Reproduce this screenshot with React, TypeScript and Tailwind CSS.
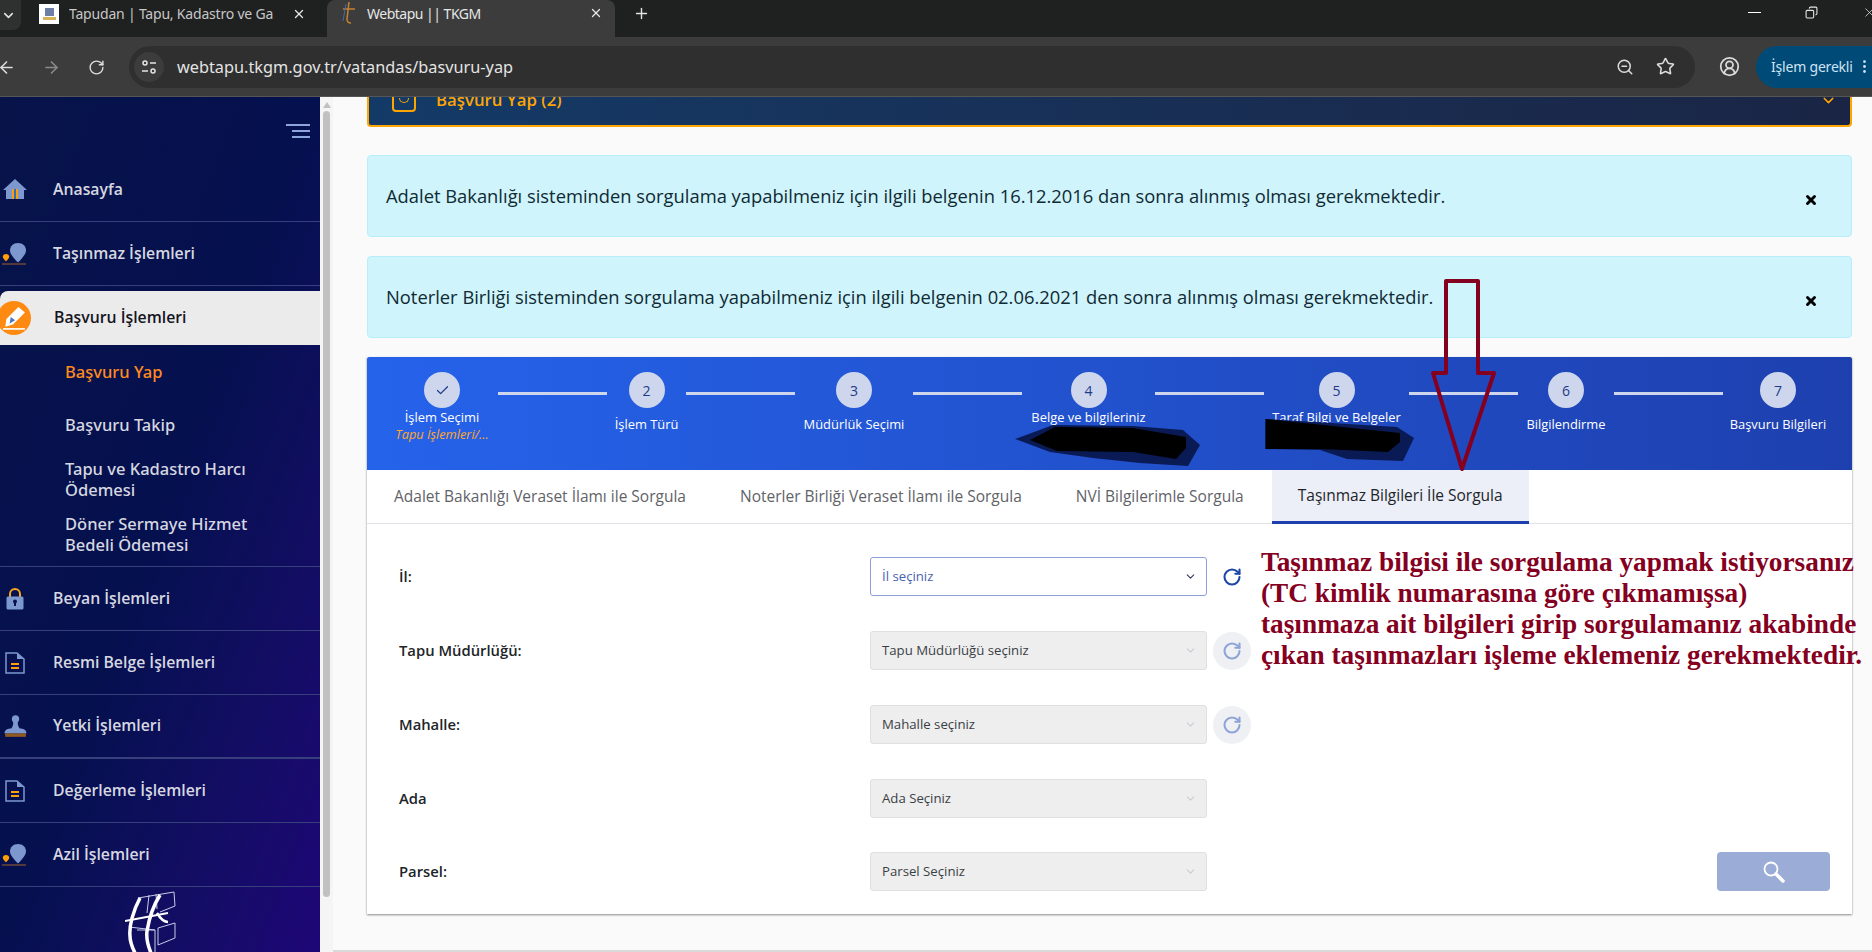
import React from 'react';
import { ArrowLeft, ArrowRight, Check, ChevronDown, Copy, MoreVertical, Plus, RotateCw, Star, CircleUserRound, X, ZoomOut } from 'lucide-react';

const menuTop = ['Beyan İşlemleri', 'Resmi Belge İşlemleri', 'Yetki İşlemleri', 'Değerleme İşlemleri', 'Azil İşlemleri'];

function PinIcon() {
  return (
    <svg width="26" height="22" viewBox="0 0 26 22">
      <path d="M16 0c5 0 8 3.500 8 7.500 0 3.500-4 8-8 12-4-4-8-8.500-8-12C8 3.500 11 0 16 0z" fill="#7d97cf" />
      <path d="M4 11c2 0 3.200 1.300 3.200 2.800 0 1.500-1.800 3.200-3.200 4.400-1.400-1.200-3.200-2.900-3.200-4.400C.8 12.300 2 11 4 11z" fill="#ff9d0a" />
      <path d="M0 21h24" stroke="#a5612a" strokeWidth="1" />
    </svg>
  );
}

function DocIcon() {
  return (
    <svg width="20" height="22" viewBox="0 0 20 22" fill="none">
      <path d="M1 1h11l7 6v14H1z" stroke="#7d97cf" strokeWidth="1.500" />
      <path d="M12 1v6h7" fill="#7d97cf" />
      <path d="M6 12h8M6 16h8" stroke="#ff9d0a" strokeWidth="1.800" />
    </svg>
  );
}

function MenuIcon({ name }: { name: string }) {
  if (name === 'Anasayfa') {
    return (
      <svg width="24" height="21" viewBox="0 0 24 21">
        <path d="M12 0l12 11h-3v9H3v-9H0z" fill="#7d97cf" />
        <rect x="9" y="10" width="6" height="10" fill="#ff9d0a" />
        <rect x="11" y="10" width="2" height="10" fill="#2f6fc0" />
      </svg>
    );
  }
  if (name === 'Beyan İşlemleri') {
    return (
      <svg width="18" height="22" viewBox="0 0 18 22">
        <path d="M4 9V6a5 5 0 0 1 10 0v3" fill="none" stroke="#f5a623" strokeWidth="2" />
        <rect x="0.500" y="8.500" width="17" height="13" rx="1.500" fill="#7d97cf" />
        <circle cx="9" cy="13.500" r="2" fill="#071150" />
        <rect x="8" y="14" width="2" height="4" fill="#071150" />
      </svg>
    );
  }
  if (name === 'Yetki İşlemleri') {
    return (
      <svg width="23" height="23" viewBox="0 0 20 20">
        <circle cx="10" cy="3.500" r="3.200" fill="#7d97cf" />
        <path d="M8 6h4c0 3 .5 4 1.500 5.500 3 .3 6 1 6 4.500H.5c0-3.500 3-4.200 6-4.500C7.500 10 8 9 8 6z" fill="#7d97cf" />
        <rect x="1" y="16" width="18" height="3" fill="#8f5a22" />
      </svg>
    );
  }
  if (name === 'Azil İşlemleri' || name === 'Taşınmaz İşlemleri') return <PinIcon />;
  return <DocIcon />;
}

function TopItem({ name, thick }: { name: string; thick?: boolean }) {
  return (
    <div className={`flex items-center h-[64px] shrink-0 border-[#37407c] ${thick ? 'border-b-2' : 'border-b'}`}>
      <div className="w-[53px] shrink-0 flex justify-center pr-[25px] pl-[2px]">
        <MenuIcon name={name} />
      </div>
      <span className="text-[15.800px] font-semibold text-[#d6d7e0]">{name}</span>
    </div>
  );
}

function Sidebar() {
  return (
    <aside className="w-[320px] shrink-0 h-full bg-gradient-to-br from-[#071349] via-[#05104f] to-[#1e0677] flex flex-col overflow-hidden">
      <div className="h-[61px] shrink-0 flex flex-col items-end gap-[4px] pt-[27px] pr-[10px]">
        <div className="w-[24px] h-[2px] bg-[#8ea5dc]" />
        <div className="w-[18px] h-[2px] bg-[#8ea5dc]" />
        <div className="w-[18px] h-[2px] bg-[#8ea5dc]" />
      </div>
      <TopItem name="Anasayfa" />
      <TopItem name="Taşınmaz İşlemleri" />
      <div className="mt-[5px] h-[54px] shrink-0 bg-[#ebebeb] rounded-tl-lg flex items-center">
        <div className="w-[54px] shrink-0 -ml-[3px] flex">
          <div className="w-[34px] h-[34px] rounded-full bg-[#ff8a12] flex items-center justify-center">
            <svg width="24" height="24" viewBox="0 0 22 22">
              <path d="M15 1l6 5L10 17l-7 2 1-7z" fill="#fff" />
              <path d="M8 10l4 3-5 3z" fill="#4a76c8" />
              <path d="M1 21h20" stroke="#fff" strokeWidth="1.500" />
            </svg>
          </div>
        </div>
        <span className="ml-[3px] text-[15.800px] font-semibold text-[#15151f]">Başvuru İşlemleri</span>
      </div>
      <div className="shrink-0 pl-[65px] pb-[5px] border-b border-[#37407c] text-[16.500px] font-medium text-[#d6d7e0] leading-[21px] font-['Noto_Sans',sans-serif]">
        <div className="h-[52px] flex items-center text-[#ff8a1f]">Başvuru Yap</div>
        <div className="h-[54px] flex items-center">Başvuru Takip</div>
        <div className="h-[55px] flex items-center">Tapu ve Kadastro Harcı<br />Ödemesi</div>
        <div className="h-[55px] flex items-center">Döner Sermaye Hizmet<br />Bedeli Ödemesi</div>
      </div>
      {menuTop.map((m) => (
        <TopItem key={m} name={m} thick={m === 'Yetki İşlemleri'} />
      ))}
      <div className="pl-[125px] pt-[4px] shrink-0">
        <svg width="52" height="62" viewBox="0 0 52 62" fill="none" stroke="#c9cbe8" strokeWidth="1">
          <path d="M13 7L49 1l1 14-15 6M24 4l-2 18M31 3l1 15M33 37l17-5v15l-17 7zM12 39h18v23M4 36l26 3" />
          <path d="M15 7C8 20 4 35 5 45c0 7 3 13 5 17" stroke="#fff" strokeWidth="3.500" />
          <path d="M35 4C28 15 24 28 22 40c-1 8 1 15 4 22" stroke="#fff" strokeWidth="3.500" />
          <path d="M0 30l43-8" stroke="#fff" strokeWidth="2" />
          <path d="M32 22c3 5 6 9 11 9" stroke="#fff" strokeWidth="2.500" />
        </svg>
      </div>
    </aside>
  );
}

function BrowserChrome() {
  return (
    <div className="shrink-0 font-['Noto_Sans',sans-serif]">
      <div className="h-[37px] bg-[#1f2020] flex items-start relative text-[#c7c7c7] overflow-hidden">
        <div className="w-[21px] h-[30px] bg-[#2f3030] rounded-br-lg flex items-center justify-center shrink-0">
          <ChevronDown size={15} strokeWidth={2.500} color="#e2e2e2" className="-ml-[5px]" />
        </div>
        <div className="flex items-center h-[27px] w-[306px] pl-[18px] shrink-0">
          <div className="w-[20px] h-[20px] bg-white shrink-0 flex flex-col items-center justify-center gap-[1px]">
            <div className="w-[9px] h-[8px] bg-[#6d7fa8]" />
            <div className="w-[13px] h-[3px] bg-[#d8b255]" />
          </div>
          <span className="ml-[10px] text-[14px] w-[209px] overflow-hidden whitespace-nowrap tracking-[-0.2px]">Tapudan | Tapu, Kadastro ve Ga</span>
          <X size={14} strokeWidth={2.200} color="#e8e8e8" className="ml-[14px]" />
        </div>
        <div className="w-[288px] h-[37px] bg-[#3c3c3c] rounded-t-lg flex items-center pl-[13px] pb-[11px] shrink-0">
          <svg width="16" height="24" viewBox="0 0 16 24" fill="none" className="shrink-0">
            <path d="M9 1L7 18c0 3 2 4 4 4" stroke="#c9822b" strokeWidth="1.500" />
            <path d="M3 8h12" stroke="#c9822b" strokeWidth="1.500" />
            <path d="M6 3L3 20" stroke="#3e6aa8" strokeWidth="1" />
          </svg>
          <span className="ml-[11px] text-[14px] text-[#e6e6e6] w-[210px] tracking-[-0.5px]">Webtapu || TKGM</span>
          <X size={14} strokeWidth={2.200} color="#e8e8e8" className="ml-[12px]" />
        </div>
        <Plus size={17} color="#e2e2e2" className="ml-[18px] mt-[5px] shrink-0" />
        <div className="ml-auto flex items-center h-[24px] gap-[44px] -mr-[5px]">
          <div className="w-[13px] h-[1px] bg-white" />
          <Copy size={13} color="#e6e6e6" className="-scale-x-100" />
          <X size={15} strokeWidth={1.200} color="#e6e6e6" />
        </div>
      </div>
      <div className="h-[60px] bg-[#3c3c3c] border-b border-[#555] flex items-center text-[#dcdcdc]">
        <ArrowLeft size={19} className="-ml-[3px] mt-[2px] shrink-0" />
        <ArrowRight size={19} color="#8b8b8b" className="ml-[26px] mt-[2px] shrink-0" />
        <RotateCw size={17} className="ml-[27px] mt-[2px] shrink-0" />
        <div className="ml-[24px] w-[1566px] h-[42px] bg-[#2f2f2f] rounded-full flex items-center pl-[5px] pr-[20px] shrink-0">
          <div className="w-[30px] h-[30px] rounded-full bg-[#3c3c3c] flex items-center justify-center shrink-0">
            <svg width="16" height="16" viewBox="0 0 16 16" fill="none" stroke="#e4e4e4" strokeWidth="1.500">
              <circle cx="4" cy="4" r="2" />
              <path d="M9 4h6M1 12h6" />
              <circle cx="12" cy="12" r="2" />
            </svg>
          </div>
          <span className="ml-[13px] mt-[2px] text-[16.300px] text-[#e4e4e4]">webtapu.tkgm.gov.tr/vatandas/basvuru-yap</span>
          <ZoomOut size={18} className="ml-auto" />
          <Star size={19} className="ml-[22px]" />
        </div>
        <CircleUserRound size={21} className="ml-[24px] shrink-0" />
        <div className="ml-[16px] h-[42px] flex-1 bg-[#004a77] rounded-l-full flex items-center pl-[15px] text-[14px] text-[#cfe4f5] whitespace-nowrap tracking-[-0.2px] overflow-hidden">
          İşlem gerekli
          <MoreVertical size={17} className="ml-[3px] shrink-0" />
        </div>
      </div>
    </div>
  );
}

const steps = [
  { n: 1, w: 'w-[112px]', label: 'İşlem Seçimi', sub: 'Tapu İşlemleri/...' },
  { n: 2, w: 'w-[79px]', label: 'İşlem Türü' },
  { n: 3, w: 'w-[118px]', label: 'Müdürlük Seçimi' },
  { n: 4, w: 'w-[133px]', label: 'Belge ve bilgileriniz', sub: ' ' },
  { n: 5, w: 'w-[145px]', label: 'Taraf Bilgi ve Belgeler', sub: ' ' },
  { n: 6, w: 'w-[96px]', label: 'Bilgilendirme' },
  { n: 7, w: 'w-[110px]', label: 'Başvuru Bilgileri' },
];

function Stepper() {
  return (
    <div className="h-[113px] bg-gradient-to-r from-[#2563eb] to-[#1e40af] rounded-t-[2px] flex items-start px-[19px] pt-[15px]">
      {steps.map((s, i) => (
        <React.Fragment key={s.n}>
          {i > 0 && <div className="w-[109px] h-[3px] bg-[#cdd6ec] mt-[20px] shrink-0" />}
          <div className={`${s.w} shrink-0 flex flex-col items-center`}>
            <div className="w-[36px] h-[36px] rounded-full bg-[#cdd6ec] flex items-center justify-center text-[14px] text-[#1e3a8a]">
              {s.n === 1 ? <Check size={15} color="#1e3a8a" /> : s.n}
            </div>
            {s.sub ? (
              <div className="flex flex-col items-center mt-[1px] leading-[17px]">
                <span className="text-[12.900px] text-white whitespace-nowrap">{s.label}</span>
                <span className="text-[12.800px] italic text-[#ffa726] whitespace-pre">{s.sub}</span>
              </div>
            ) : (
              <span className="mt-[8px] leading-[17px] text-[12.900px] text-white whitespace-nowrap">{s.label}</span>
            )}
          </div>
        </React.Fragment>
      ))}
    </div>
  );
}

const tabs = [
  { label: 'Adalet Bakanlığı Veraset İlamı ile Sorgula', active: false },
  { label: 'Noterler Birliği Veraset İlamı ile Sorgula', active: false },
  { label: 'NVİ Bilgilerimle Sorgula', active: false },
  { label: 'Taşınmaz Bilgileri İle Sorgula', active: true },
];

const rows = [
  { label: 'İl:', placeholder: 'İl seçiniz', enabled: true, refresh: true },
  { label: 'Tapu Müdürlüğü:', placeholder: 'Tapu Müdürlüğü seçiniz', enabled: false, refresh: true },
  { label: 'Mahalle:', placeholder: 'Mahalle seçiniz', enabled: false, refresh: true },
  { label: 'Ada', placeholder: 'Ada Seçiniz', enabled: false, refresh: false },
  { label: 'Parsel:', placeholder: 'Parsel Seçiniz', enabled: false, refresh: false },
];

function FormRow({ row }: { row: (typeof rows)[number] }) {
  const last = row.label === 'Parsel:';
  return (
    <div className={`flex items-center h-[39px] ${last ? 'mt-[34px]' : 'mt-[35px] first:mt-0'}`}>
      <label className="w-[503px] pl-[32px] shrink-0 text-[14.800px] font-semibold text-[#212529]">{row.label}</label>
      <div
        className={`w-[337px] h-[39px] shrink-0 rounded-[3px] border flex items-center justify-between pl-[11px] pr-[9px] text-[13.200px] ${
          row.enabled ? 'bg-white border-[#8c9fd8] text-[#4a63b0]' : 'bg-[#eeeeee] border-[#e0e0e0] text-[#3a3f45]'
        }`}
      >
        <span>{row.placeholder}</span>
        <ChevronDown size={13} strokeWidth={2} color={row.enabled ? '#343a5c' : '#c9ccd4'} />
      </div>
      {row.refresh && (
        <div className={`ml-[6px] w-[38px] h-[38px] rounded-full flex items-center justify-center ${row.enabled ? '' : 'bg-[#eff0f4]'}`}>
          <RotateCw size={20} strokeWidth={2.500} color={row.enabled ? '#1e46a8' : '#8ea3d8'} />
        </div>
      )}
      {last && (
        <div className="ml-auto mr-[22px] w-[113px] h-[39px] rounded-[4px] bg-[#9bacd6] flex items-center justify-center">
          <svg width="24" height="24" viewBox="0 0 24 24" fill="none" stroke="#fff">
            <circle cx="9" cy="9" r="6.500" strokeWidth="1.800" />
            <path d="M14 14l7 7" strokeWidth="3.500" strokeLinecap="round" />
          </svg>
        </div>
      )}
    </div>
  );
}

function Alert({ text }: { text: string }) {
  return (
    <div className="h-[82px] bg-[#cff4fc] border border-[#b6effb] rounded-[4px] flex pl-[18px] pr-[35px] pt-[30px] text-[#0f2a33] text-[18.350px] leading-[20px]">
      <span>{text}</span>
      <X size={14} strokeWidth={5} color="#000" className="ml-auto mt-[7px] mr-[-2px] shrink-0" />
    </div>
  );
}

function Annotations() {
  return (
    <>
      <svg className="absolute left-0 top-0 pointer-events-none" width="1872" height="952" fill="none">
        <path d="M1015 439L1053 425 1133 426 1183 430 1200 445 1188 466 1140 463 1093 458 1050 452z" fill="#0a1a55" />
        <path d="M1030 440L1055 427 1133 428 1186 437 1186 448 1176 459 1133 452 1057 451z" fill="#000" />
        <path d="M1265 419L1397 427 1414 438 1403 461 1347 459 1320 450 1265 449z" fill="#0a1a55" />
        <path d="M1266 419L1400 433 1400 442 1388 452 1320 449 1266 449z" fill="#000" />
        <path d="M1446 281h32v92h16l-32 96-29-96h13z" stroke="#85001f" strokeWidth="4" strokeLinejoin="round" />
      </svg>
      <div className="absolute left-[1261px] top-[547px] font-['Liberation_Serif',serif] font-bold text-[27.300px] leading-[31px] text-[#85001f] whitespace-nowrap">
        Taşınmaz bilgisi ile sorgulama yapmak istiyorsanız<br />
        (TC kimlik numarasına göre çıkmamışsa)<br />
        taşınmaza ait bilgileri girip sorgulamanız akabinde<br />
        çıkan taşınmazları işleme eklemeniz gerekmektedir.
      </div>
    </>
  );
}

export default function App() {
  return (
    <div className="relative h-screen w-full overflow-hidden flex flex-col bg-white font-['Open_Sans',sans-serif]">
      <BrowserChrome />
      <div className="flex flex-1 min-h-0">
        <Sidebar />
        <div className="w-[13px] shrink-0 bg-[#f5f5f5] flex flex-col items-center">
          <div className="mt-[5px] w-0 h-0 border-x-[4px] border-x-transparent border-b-[6px] border-b-[#c1c1c1]" />
          <div className="mt-[3px] w-[7px] h-[786px] rounded-full bg-[#c1c1c1]" />
        </div>
        <main className="flex-1 min-w-0 bg-[#fafafa] flex flex-col overflow-hidden">
          <div className="flex-1 min-h-0 pl-[34px] pr-[20px]">
            <div className="-mt-[28px] h-[58px] bg-gradient-to-r from-[#133a67] to-[#1a2545] border-x-2 border-b-2 border-[#ffa500] rounded-b-[4px] flex items-center pl-[23px] pr-[13px] pt-[6px]">
              <div className="w-[24px] h-[24px] rounded-[4px] border-2 border-[#ffa500] flex items-center justify-center">
                <div className="w-[10px] h-[5px] border-b border-x border-[#ffa500] rounded-b-full" />
              </div>
              <span className="ml-[20px] text-[16.800px] font-semibold text-[#ffa500]">Başvuru Yap (2)</span>
              <ChevronDown size={17} color="#ffa500" className="ml-auto" />
            </div>
            <div className="mt-[28px] flex flex-col gap-[19px]">
              <Alert text="Adalet Bakanlığı sisteminden sorgulama yapabilmeniz için ilgili belgenin 16.12.2016 dan sonra alınmış olması gerekmektedir." />
              <Alert text="Noterler Birliği sisteminden sorgulama yapabilmeniz için ilgili belgenin 02.06.2021 den sonra alınmış olması gerekmektedir." />
            </div>
            <div className="mt-[19px] bg-white shadow-[0_1px_2px_rgba(0,0,0,0.45)] pb-[23px]">
              <Stepper />
              <div className="h-[54px] border-b border-[#e1e3e8] flex">
                {tabs.map((t) => (
                  <div
                    key={t.label}
                    className={`h-[54px] px-[27px] flex items-center text-[15.500px] whitespace-nowrap ${
                      t.active ? 'w-[257px] ml-[1px] justify-center bg-[#eceef8] border-b-[3px] border-[#1e3fae] text-[#212529] font-medium' : 'text-[#5f6368]'
                    }`}
                  >
                    {t.label}
                  </div>
                ))}
              </div>
              <div className="pt-[33px]">
                {rows.map((r) => (
                  <FormRow key={r.label} row={r} />
                ))}
              </div>
            </div>
          </div>
          <div className="h-[2px] shrink-0 bg-[#d9d9d9]" />
        </main>
      </div>
      <Annotations />
    </div>
  );
}
